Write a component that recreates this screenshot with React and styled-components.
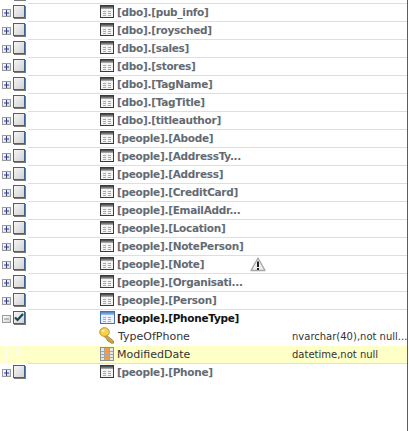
import React from "react";
import styled, { createGlobalStyle } from "styled-components";

const Global = createGlobalStyle`
  html, body { margin: 0; padding: 0; background: #fff; }
  body { font-family: "DejaVu Sans", Tahoma, sans-serif; overflow: hidden; }
`;

const Tree = styled.div`
  width: 408px;
  height: 445px;
  margin-top: -14px;
  box-sizing: border-box;
  border-right: 1px solid #5c5c5c;
`;

const Row = styled.div`
  display: flex;
  height: 18px;
  background: ${(p) => (p.$hl ? "#ffffc8" : "transparent")};
`;

const Controls = styled.div`
  flex: none;
  width: 28px;
  box-sizing: border-box;
  padding: 1px 0 0 2px;
  display: flex;
  align-items: flex-start;
  gap: 2px;
`;

const Guides = styled.div`
  flex: none;
  width: 28px;
  background-image: ${(p) =>
    p.$show
      ? `repeating-linear-gradient(to bottom, #fff 0 1px, transparent 1px 2px),
         repeating-linear-gradient(to bottom, #fff 0 1px, transparent 1px 2px),
         repeating-linear-gradient(to right, #fff 0 1px, transparent 1px 2px)`
      : "none"};
  background-repeat: no-repeat;
  background-size: 1px 18px, 1px 9px, 7px 1px;
  background-position: 6px 0, 18px 0, 18px 9px;
`;

const Content = styled.div`
  flex: 1;
  min-width: 0;
  padding-left: 72px;
  display: grid;
  grid-template-columns: 150px 42px 1fr;
  align-items: center;
  box-sizing: border-box;
  border-bottom: 1px solid ${(p) => (p.$noLine ? "transparent" : "#dedede")};
`;

const Expander = styled.span`
  position: relative;
  flex: none;
  width: 9px;
  height: 8px;
  margin-top: 4px;
  box-sizing: border-box;
  border: 1px solid #9a9a9a;
  background: linear-gradient(135deg, #fff, #d4d4d4);
  &::before {
    content: "";
    position: absolute;
    left: 1px; right: 1px; top: 2px;
    height: 2px;
    background: ${(p) => (p.$open ? "#7f8b99" : "#2a3f8f")};
    transform: scaleY(0.5);
  }
  &::after {
    content: "";
    display: ${(p) => (p.$open ? "none" : "block")};
    position: absolute;
    top: 0; bottom: 0; left: 3px;
    width: 1px;
    background: #2a3f8f;
  }
`;

const Spacer = styled.span`
  flex: none;
  width: 9px;
`;

const Check = styled.span`
  flex: none;
  width: 12px;
  height: 13px;
  box-sizing: border-box;
  border: 1px solid #3b6494;
  box-shadow: 1px 1px 0 #7a7a7a;
  background: linear-gradient(135deg, #f6f6f6, #d2d2d2);
  display: flex;
  align-items: center;
  justify-content: center;
`;

const NameCell = styled.div`
  display: flex;
  align-items: center;
  min-width: 0;
  height: 17px;
  box-sizing: border-box;
  padding-bottom: 2px;
`;

const Name = styled.span`
  font-size: 10.5px;
  font-weight: 700;
  letter-spacing: -0.28px;
  color: ${(p) => (p.$active ? "#111" : "#646a72")};
  white-space: nowrap;
  line-height: 15px;
  margin-top: 2px;
`;

const Field = styled.span`
  font-size: 11px;
  color: #333;
  white-space: nowrap;
  line-height: 15px;
  margin-top: 2px;
`;

const TypeText = styled.span`
  grid-column: 3;
  font-size: 10px;
  color: #333;
  white-space: nowrap;
  line-height: 17px;
`;

const Glyph = styled.svg`
  display: block;
  flex: none;
  margin-right: ${(p) => p.$gap}px;
`;

const KeyGlyph = styled(Glyph)`
  margin-left: -1px;
`;

const WarnSlot = styled.div`
  grid-column: 2;
`;

const TableIcon = ({ active }) => {
  const id = active ? "barBlue" : "barGrey";
  return (
    <Glyph $gap={active ? 2 : 3} width={active ? 15 : 14} height="13" viewBox={active ? "0 0 15 13" : "0 0 14 13"}>
      <defs>
        <linearGradient id={id} x1="0" y1="0" x2="0" y2="1">
          <stop offset="0" stopColor={active ? "#4f7cc8" : "#3c3c3c"} />
          <stop offset="1" stopColor={active ? "#a9c4ee" : "#b8b8b8"} />
        </linearGradient>
      </defs>
      <rect x="0.5" y="0.5" width={active ? 14 : 13} height="12" fill={active ? "#eef3fb" : "#f3f3f3"} stroke={active ? "#456fb0" : "#3a3a3a"} />
      <rect x="1" y="1" width={active ? 13 : 12} height="3" fill={`url(#${id})`} />
      <g fill={active ? "#8fb0e0" : "#a8a8a8"}>
        {[6, 8, 10].map((y) => (
          <React.Fragment key={y}>
            <rect x="3" y={y} width="3" height="1" />
            <rect x="8" y={y} width="3" height="1" />
          </React.Fragment>
        ))}
      </g>
    </Glyph>
  );
};

const KeyIcon = () => (
  <KeyGlyph $gap={2} width="17" height="17" viewBox="0 0 17 17">
    <path d="M6.5 7.5l8 6.5v2.2h-2.4l-1.2-1.4-1.2.2-.2-1.4-1.4-.2-.2-1.4L5 9.5z" fill="#d2a83e" stroke="#8a6a28" strokeWidth="0.7" strokeLinejoin="round" />
    <ellipse cx="5.5" cy="5" rx="4.8" ry="4.3" fill="#f8d24e" stroke="#c2952a" />
    <ellipse cx="4.2" cy="3.8" rx="1.4" ry="1.1" fill="#fff2a8" />
  </KeyGlyph>
);

const ColumnIcon = () => (
  <Glyph $gap={3} width="14" height="14" viewBox="0 0 14 14">
    <rect x="0.5" y="0.5" width="13" height="13" fill="#e6e6e6" stroke="#8f8f8f" />
    <rect x="5" y="1" width="4" height="12" fill="#f0a040" />
    <path d="M1 4.5h12M1 7.5h12M1 10.5h12M4.5 1v12M9.5 1v12" stroke="#a5a5a5" strokeWidth="1" fill="none" />
  </Glyph>
);

const WarnIcon = () => (
  <Glyph $gap={0} width="16" height="15" viewBox="0 0 16 15">
    <path d="M8 1L15 13.5H1z" fill="#efefef" stroke="#a8a8a8" strokeWidth="1.4" strokeLinejoin="round" />
    <rect x="7" y="4.5" width="2" height="5.5" fill="#222" />
    <rect x="7" y="11" width="2" height="2" fill="#222" />
  </Glyph>
);

const CheckMark = () => (
  <svg width="10" height="9" viewBox="0 0 10 9">
    <path d="M1 4.5l2.5 2.5L9 1" fill="none" stroke="#17474f" strokeWidth="2.2" />
  </svg>
);

const tables = [
  "[dbo].[pub_info]", "[dbo].[roysched]", "[dbo].[sales]", "[dbo].[stores]", "[dbo].[TagName]",
  "[dbo].[TagTitle]", "[dbo].[titleauthor]", "[people].[Abode]", "[people].[AddressTy...",
  "[people].[Address]", "[people].[CreditCard]", "[people].[EmailAddr...", "[people].[Location]",
  "[people].[NotePerson]", "[people].[Note]", "[people].[Organisati...", "[people].[Person]",
];

const TableRow = ({ name, warn, open, noLine }) => (
  <Row>
    <Controls>
      <Expander $open={open} />
      <Check>{open && <CheckMark />}</Check>
    </Controls>
    <Content $noLine={noLine}>
      <NameCell>
        <TableIcon active={open} />
        <Name $active={open}>{name}</Name>
      </NameCell>
      {warn && (
        <WarnSlot>
          <WarnIcon />
        </WarnSlot>
      )}
    </Content>
  </Row>
);

const ColumnRow = ({ icon, name, type, hl }) => (
  <Row $hl={hl}>
    <Guides $show={hl} />
    <Content $noLine={!hl}>
      <NameCell>
        {icon}
        <Field>{name}</Field>
      </NameCell>
      <TypeText>{type}</TypeText>
    </Content>
  </Row>
);

const ClippedRow = () => (
  <Row>
    <Controls>
      <Spacer />
      <Check />
    </Controls>
    <Content />
  </Row>
);

export default function App() {
  return (
    <>
      <Global />
      <Tree>
        <ClippedRow />
        {tables.map((t) => (
          <TableRow key={t} name={t} warn={t === "[people].[Note]"} />
        ))}
        <TableRow name="[people].[PhoneType]" open noLine />
        <ColumnRow icon={<KeyIcon />} name="TypeOfPhone" type="nvarchar(40),not null..." />
        <ColumnRow icon={<ColumnIcon />} name="ModifiedDate" type="datetime,not null" hl />
        <TableRow name="[people].[Phone]" noLine />
      </Tree>
    </>
  );
}
